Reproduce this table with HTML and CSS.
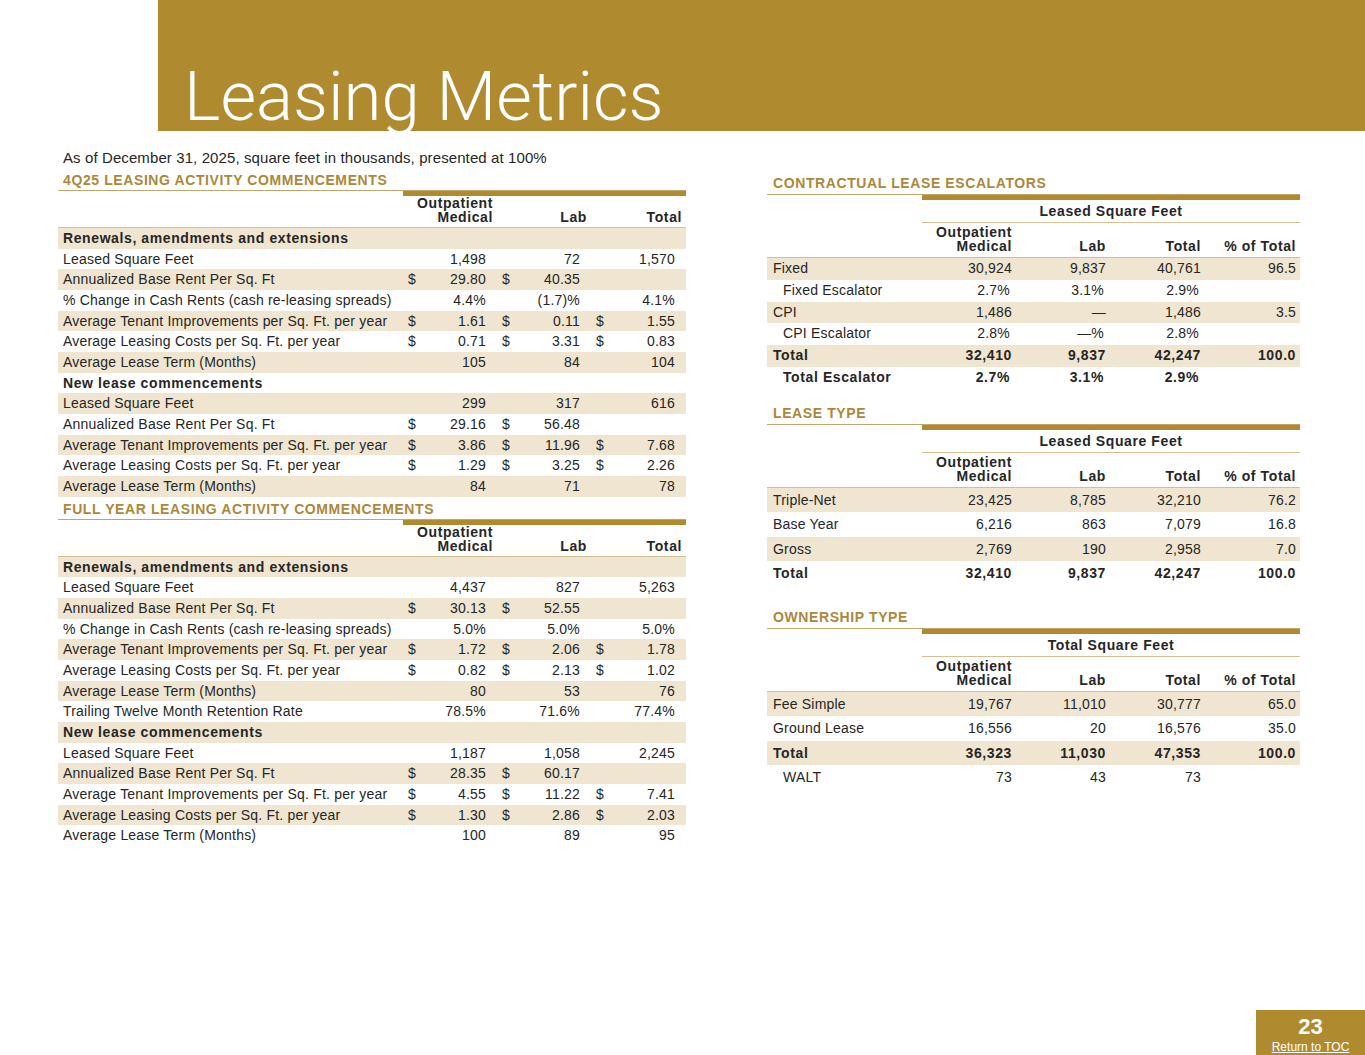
FILE: index.html
```html
<!DOCTYPE html>
<html lang="en">
<head>
<meta charset="utf-8">
<title>Leasing Metrics</title>
<link rel="stylesheet" href="styles.css">
</head>
<body>
<header class="banner"><h1>Leasing Metrics</h1></header>
<main class="content">
  <section class="left">
    <p class="note">As of December 31, 2025, square feet in thousands, presented at 100%</p>
    <h2 class="sec">4Q25 LEASING ACTIVITY COMMENCEMENTS</h2>
    <table class="lt">
      <colgroup><col class="c-label"><col class="c-cur"><col class="c-val"><col class="c-cur"><col class="c-val"><col class="c-cur"><col class="c-val2"></colgroup>
      <thead><tr><th class="blank"></th><th colspan="2">Outpatient<br>Medical</th><th colspan="2">Lab</th><th colspan="2">Total</th></tr></thead>
      <tbody>
        <tr class="sub"><td colspan="7">Renewals, amendments and extensions</td></tr>
        <tr><td>Leased Square Feet</td><td class="c"></td><td class="n">1,498</td><td class="c"></td><td class="n">72</td><td class="c"></td><td class="n">1,570</td></tr>
        <tr><td>Annualized Base Rent Per Sq. Ft</td><td class="c">$</td><td class="n">29.80</td><td class="c">$</td><td class="n">40.35</td><td class="c"></td><td class="n"></td></tr>
        <tr><td>% Change in Cash Rents (cash re-leasing spreads)</td><td class="c"></td><td class="n">4.4%</td><td class="c"></td><td class="n">(1.7)%</td><td class="c"></td><td class="n">4.1%</td></tr>
        <tr><td>Average Tenant Improvements per Sq. Ft. per year</td><td class="c">$</td><td class="n">1.61</td><td class="c">$</td><td class="n">0.11</td><td class="c">$</td><td class="n">1.55</td></tr>
        <tr><td>Average Leasing Costs per Sq. Ft. per year</td><td class="c">$</td><td class="n">0.71</td><td class="c">$</td><td class="n">3.31</td><td class="c">$</td><td class="n">0.83</td></tr>
        <tr><td>Average Lease Term (Months)</td><td class="c"></td><td class="n">105</td><td class="c"></td><td class="n">84</td><td class="c"></td><td class="n">104</td></tr>
        <tr class="sub"><td colspan="7">New lease commencements</td></tr>
        <tr><td>Leased Square Feet</td><td class="c"></td><td class="n">299</td><td class="c"></td><td class="n">317</td><td class="c"></td><td class="n">616</td></tr>
        <tr><td>Annualized Base Rent Per Sq. Ft</td><td class="c">$</td><td class="n">29.16</td><td class="c">$</td><td class="n">56.48</td><td class="c"></td><td class="n"></td></tr>
        <tr><td>Average Tenant Improvements per Sq. Ft. per year</td><td class="c">$</td><td class="n">3.86</td><td class="c">$</td><td class="n">11.96</td><td class="c">$</td><td class="n">7.68</td></tr>
        <tr><td>Average Leasing Costs per Sq. Ft. per year</td><td class="c">$</td><td class="n">1.29</td><td class="c">$</td><td class="n">3.25</td><td class="c">$</td><td class="n">2.26</td></tr>
        <tr><td>Average Lease Term (Months)</td><td class="c"></td><td class="n">84</td><td class="c"></td><td class="n">71</td><td class="c"></td><td class="n">78</td></tr>
      </tbody>
    </table>
    <h2 class="sec sec-2">FULL YEAR LEASING ACTIVITY COMMENCEMENTS</h2>
    <table class="lt">
      <colgroup><col class="c-label"><col class="c-cur"><col class="c-val"><col class="c-cur"><col class="c-val"><col class="c-cur"><col class="c-val2"></colgroup>
      <thead><tr><th class="blank"></th><th colspan="2">Outpatient<br>Medical</th><th colspan="2">Lab</th><th colspan="2">Total</th></tr></thead>
      <tbody>
        <tr class="sub"><td colspan="7">Renewals, amendments and extensions</td></tr>
        <tr><td>Leased Square Feet</td><td class="c"></td><td class="n">4,437</td><td class="c"></td><td class="n">827</td><td class="c"></td><td class="n">5,263</td></tr>
        <tr><td>Annualized Base Rent Per Sq. Ft</td><td class="c">$</td><td class="n">30.13</td><td class="c">$</td><td class="n">52.55</td><td class="c"></td><td class="n"></td></tr>
        <tr><td>% Change in Cash Rents (cash re-leasing spreads)</td><td class="c"></td><td class="n">5.0%</td><td class="c"></td><td class="n">5.0%</td><td class="c"></td><td class="n">5.0%</td></tr>
        <tr><td>Average Tenant Improvements per Sq. Ft. per year</td><td class="c">$</td><td class="n">1.72</td><td class="c">$</td><td class="n">2.06</td><td class="c">$</td><td class="n">1.78</td></tr>
        <tr><td>Average Leasing Costs per Sq. Ft. per year</td><td class="c">$</td><td class="n">0.82</td><td class="c">$</td><td class="n">2.13</td><td class="c">$</td><td class="n">1.02</td></tr>
        <tr><td>Average Lease Term (Months)</td><td class="c"></td><td class="n">80</td><td class="c"></td><td class="n">53</td><td class="c"></td><td class="n">76</td></tr>
        <tr><td>Trailing Twelve Month Retention Rate</td><td class="c"></td><td class="n">78.5%</td><td class="c"></td><td class="n">71.6%</td><td class="c"></td><td class="n">77.4%</td></tr>
        <tr class="sub"><td colspan="7">New lease commencements</td></tr>
        <tr><td>Leased Square Feet</td><td class="c"></td><td class="n">1,187</td><td class="c"></td><td class="n">1,058</td><td class="c"></td><td class="n">2,245</td></tr>
        <tr><td>Annualized Base Rent Per Sq. Ft</td><td class="c">$</td><td class="n">28.35</td><td class="c">$</td><td class="n">60.17</td><td class="c"></td><td class="n"></td></tr>
        <tr><td>Average Tenant Improvements per Sq. Ft. per year</td><td class="c">$</td><td class="n">4.55</td><td class="c">$</td><td class="n">11.22</td><td class="c">$</td><td class="n">7.41</td></tr>
        <tr><td>Average Leasing Costs per Sq. Ft. per year</td><td class="c">$</td><td class="n">1.30</td><td class="c">$</td><td class="n">2.86</td><td class="c">$</td><td class="n">2.03</td></tr>
        <tr><td>Average Lease Term (Months)</td><td class="c"></td><td class="n">100</td><td class="c"></td><td class="n">89</td><td class="c"></td><td class="n">95</td></tr>
      </tbody>
    </table>
  </section>

  <section class="right">
    <h2 class="sec sec-r">CONTRACTUAL LEASE ESCALATORS</h2>
    <table class="rt rt-esc">
      <colgroup><col class="r-label"><col class="r-a"><col class="r-a"><col class="r-b"><col class="r-b"></colgroup>
      <thead>
        <tr><th class="blank"></th><th colspan="4" class="span">Leased Square Feet</th></tr>
        <tr class="h2"><th></th><th>Outpatient<br>Medical</th><th>Lab</th><th>Total</th><th>% of Total</th></tr>
      </thead>
      <tbody>
        <tr><td>Fixed</td><td class="n">30,924</td><td class="n">9,837</td><td class="n">40,761</td><td class="n">96.5</td></tr>
        <tr><td class="ind">Fixed Escalator</td><td class="n p">2.7%</td><td class="n p">3.1%</td><td class="n p">2.9%</td><td class="n"></td></tr>
        <tr><td>CPI</td><td class="n">1,486</td><td class="n">—</td><td class="n">1,486</td><td class="n">3.5</td></tr>
        <tr><td class="ind">CPI Escalator</td><td class="n p">2.8%</td><td class="n p">—%</td><td class="n p">2.8%</td><td class="n"></td></tr>
        <tr class="tot"><td>Total</td><td class="n">32,410</td><td class="n">9,837</td><td class="n">42,247</td><td class="n">100.0</td></tr>
        <tr class="tot"><td class="ind">Total Escalator</td><td class="n p">2.7%</td><td class="n p">3.1%</td><td class="n p">2.9%</td><td class="n"></td></tr>
      </tbody>
    </table>

    <h2 class="sec sec-r sec-lt">LEASE TYPE</h2>
    <table class="rt rt-tall">
      <colgroup><col class="r-label"><col class="r-a"><col class="r-a"><col class="r-b"><col class="r-b"></colgroup>
      <thead>
        <tr><th class="blank"></th><th colspan="4" class="span">Leased Square Feet</th></tr>
        <tr class="h2"><th></th><th>Outpatient<br>Medical</th><th>Lab</th><th>Total</th><th>% of Total</th></tr>
      </thead>
      <tbody>
        <tr><td>Triple-Net</td><td class="n">23,425</td><td class="n">8,785</td><td class="n">32,210</td><td class="n">76.2</td></tr>
        <tr><td>Base Year</td><td class="n">6,216</td><td class="n">863</td><td class="n">7,079</td><td class="n">16.8</td></tr>
        <tr><td>Gross</td><td class="n">2,769</td><td class="n">190</td><td class="n">2,958</td><td class="n">7.0</td></tr>
        <tr class="tot"><td>Total</td><td class="n">32,410</td><td class="n">9,837</td><td class="n">42,247</td><td class="n">100.0</td></tr>
      </tbody>
    </table>

    <h2 class="sec sec-r sec-ow">OWNERSHIP TYPE</h2>
    <table class="rt rt-tall">
      <colgroup><col class="r-label"><col class="r-a"><col class="r-a"><col class="r-b"><col class="r-b"></colgroup>
      <thead>
        <tr><th class="blank"></th><th colspan="4" class="span">Total Square Feet</th></tr>
        <tr class="h2"><th></th><th>Outpatient<br>Medical</th><th>Lab</th><th>Total</th><th>% of Total</th></tr>
      </thead>
      <tbody>
        <tr><td>Fee Simple</td><td class="n">19,767</td><td class="n">11,010</td><td class="n">30,777</td><td class="n">65.0</td></tr>
        <tr><td>Ground Lease</td><td class="n">16,556</td><td class="n">20</td><td class="n">16,576</td><td class="n">35.0</td></tr>
        <tr class="tot"><td>Total</td><td class="n">36,323</td><td class="n">11,030</td><td class="n">47,353</td><td class="n">100.0</td></tr>
        <tr><td class="ind">WALT</td><td class="n">73</td><td class="n">43</td><td class="n">73</td><td class="n"></td></tr>
      </tbody>
    </table>
  </section>
</main>
<footer class="pagebox">
  <div class="pnum">23</div>
  <a class="toc" href="#">Return to TOC</a>
</footer>
</body>
</html>
```

FILE: styles.css
```css
* { box-sizing: border-box; }
html, body { margin: 0; padding: 0; }
body {
  width: 1365px;
  height: 1055px;
  overflow: hidden;
  display: flex;
  flex-direction: column;
  font-family: "Liberation Sans", Arial, sans-serif;
  color: #262626;
  background: #fff;
}

.banner {
  margin-left: 158px;
  height: 131px;
  flex: none;
  background: #b08a2e;
  padding: 62px 0 0 26px;
}
.banner h1 {
  margin: 0;
  font-family: Roboto, "Liberation Sans", sans-serif;
  font-weight: 300;
  font-size: 69px;
  line-height: 69px;
  color: #fff;
  white-space: nowrap;
}

.content {
  display: flex;
  align-items: flex-start;
  gap: 81px;
  padding: 18px 0 0 58px;
}
.left { width: 628px; }
.right { width: 533px; margin-top: 26px; }

.note {
  margin: 0 0 5px;
  padding-left: 5px;
  font-size: 15px;
  line-height: 18px;
  letter-spacing: 0.1px;
  white-space: nowrap;
}

.sec {
  margin: 0;
  padding: 0 0 2px 5px;
  font-size: 14px;
  line-height: 16px;
  font-weight: bold;
  letter-spacing: 0.6px;
  color: #ab883a;
  border-bottom: 1px solid #c2a56a;
  white-space: nowrap;
}
.sec-2 { margin-top: 4px; }
.sec-r { padding: 0 0 3px 6px; }
.sec-lt { margin-top: 16px; }
.sec-ow { margin-top: 23px; }

table {
  border-collapse: separate;
  border-spacing: 0;
  table-layout: fixed;
  font-size: 14px;
  letter-spacing: 0.2px;
}
th {
  font-weight: bold;
  letter-spacing: 0.6px;
  text-align: right;
  vertical-align: bottom;
}
td { padding: 0; white-space: nowrap; }
tbody tr:nth-child(odd) td { background: #efe5d0; }

/* left tables */
.lt { width: 628px; }
.lt .c-label { width: 345px; }
.lt .c-cur { width: 22px; }
.lt .c-val { width: 72px; }
.lt .c-val2 { width: 73px; }
.lt th {
  line-height: 14px;
  padding: 0 4px 3px 0;
  border-top: 5px solid #b08a2e;
  border-bottom: 1px solid #d3bf92;
}
.lt th.blank { border-top: 0; }
.lt td { line-height: 20.67px; }
.lt td:first-child { padding-left: 5px; }
.lt td.c { padding-left: 5px; }
.lt td.n { text-align: right; padding-right: 11px; }
.lt tr.sub td { font-weight: bold; letter-spacing: 0.6px; }

/* right tables */
.rt { width: 533px; }
.rt .r-label { width: 155px; }
.rt .r-a { width: 94px; }
.rt .r-b { width: 95px; }
.rt th { padding: 0 4px 0 0; }
.rt th.span {
  text-align: center;
  padding: 3px 0;
  line-height: 16px;
  border-top: 5px solid #b08a2e;
  border-bottom: 1px solid #d3bf92;
}
.rt th.blank { border: 0; }
.rt tr.h2 th {
  line-height: 14px;
  padding: 2px 4px 4px 0;
  border-bottom: 1px solid #d3bf92;
}
.rt td { line-height: 21.8px; }
.rt-tall td { line-height: 24.5px; }
.rt td:first-child { padding-left: 6px; }
.rt td.ind { padding-left: 16px; }
.rt td.n { text-align: right; padding-right: 4px; }
.rt td.p { padding-right: 6px; }
.rt tr.tot td { font-weight: bold; letter-spacing: 0.6px; }

/* page number badge */
.pagebox {
  margin-top: auto;
  align-self: flex-end;
  width: 109px;
  height: 45px;
  flex: none;
  background: #b08a2e;
  color: #fff;
  text-align: center;
  padding-top: 4px;
}
.pnum {
  font-size: 22px;
  line-height: 26px;
  font-weight: bold;
}
.toc {
  display: block;
  font-size: 12px;
  line-height: 14px;
  color: #fff;
  text-decoration: underline;
}
```
